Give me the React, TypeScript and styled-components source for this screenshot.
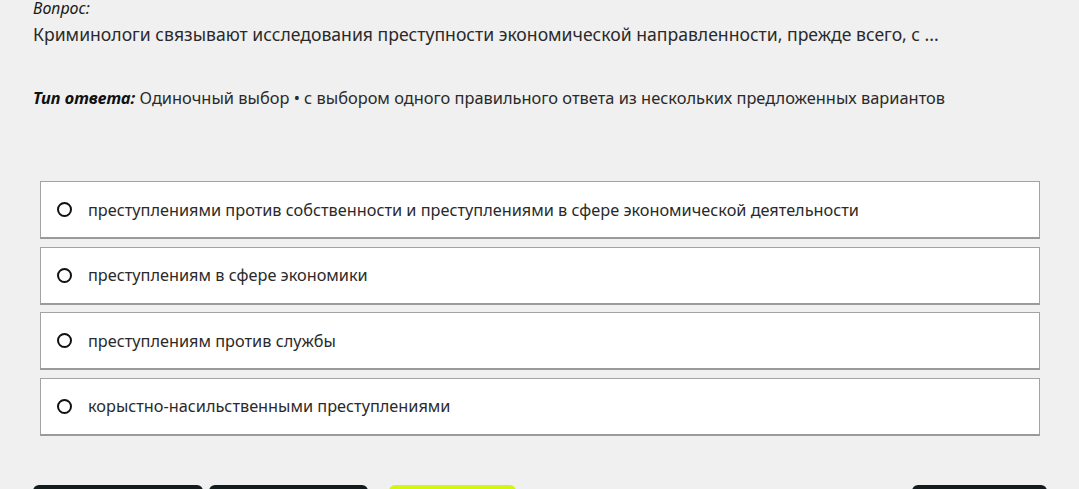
import React, {useState} from 'react';
import styled, {createGlobalStyle} from 'styled-components';

const GlobalStyle = createGlobalStyle`
    body {
        margin: 0;
        background: #f0f0f0;
        font-family: "Noto Sans", "Open Sans", sans-serif;
        color: #222;
        overflow: hidden;
    }
`;

const Page = styled.div`
    padding: 0 32px 0 33px;
`;

const Label = styled.div`
    font-size: 16px;
    font-style: italic;
    line-height: 16px;
    color: #1a1a1a;
`;

const QuestionText = styled.div`
    font-size: 17.6px;
    line-height: 26px;
    margin-top: 5px;
    color: #2a2a2a;
`;

const AnswerType = styled.div`
    font-size: 16.4px;
    line-height: 24px;
    margin-top: 39px;
    color: #2a2a2a;
    b {
        font-style: italic;
        font-weight: 700;
        color: #111;
    }
`;

const Options = styled.div`
    display: flex;
    flex-direction: column;
    gap: 7.5px;
    margin: 71px 7px 0 7px;
`;

const Option = styled.label`
    display: flex;
    align-items: center;
    gap: 16px;
    height: 58px;
    box-sizing: border-box;
    padding: 0 0 0 16px;
    background: #fff;
    border: 1px solid #a3a3a3;
    border-bottom: 2px solid #9a9a9a;
    font-size: 16.3px;
    color: #2a2a2a;
    cursor: pointer;
`;

const Radio = styled.span<{ checked: boolean }>`
    width: 15px;
    height: 15px;
    box-sizing: border-box;
    border-radius: 50%;
    border: 2.5px solid #111;
    background: ${p => p.checked ? 'radial-gradient(#111 35%, #fff 40%)' : '#fff'};
    flex-shrink: 0;
`;

const Footer = styled.div`
    display: flex;
    align-items: flex-start;
    gap: 6px;
    margin-top: 49px;
`;

const FooterButton = styled.button<{ width: number; accent?: boolean }>`
    width: ${p => p.width}px;
    height: 40px;
    border: none;
    border-radius: 6px;
    background: ${p => p.accent ? '#d4f50f' : '#141b1f'};
    flex-shrink: 0;
`;

const Spacer = styled.div`
    flex: 1;
`;

const answers = [
    'преступлениями против собственности и преступлениями в сфере экономической деятельности',
    'преступлениям в сфере экономики',
    'преступлениям против службы',
    'корыстно-насильственными преступлениями',
];

const App = () => {
    const [selected, setSelected] = useState<number | null>(null);
    return (
        <>
            <GlobalStyle/>
            <Page>
                <Label>Вопрос:</Label>
                <QuestionText>
                    Криминологи связывают исследования преступности экономической направленности, прежде всего, с ...
                </QuestionText>
                <AnswerType>
                    <b>Тип ответа:</b> Одиночный выбор • с выбором одного правильного ответа из нескольких предложенных вариантов
                </AnswerType>
                <Options>
                    {answers.map((answer, index) => (
                        <Option key={index} onClick={() => setSelected(index)}>
                            <Radio checked={selected === index}/>
                            {answer}
                        </Option>
                    ))}
                </Options>
                <Footer>
                    <FooterButton width={170}/>
                    <FooterButton width={159} style={{marginRight: 15}}/>
                    <FooterButton width={127} accent/>
                    <Spacer/>
                    <FooterButton width={135}/>
                </Footer>
            </Page>
        </>
    )
}

export default App;
